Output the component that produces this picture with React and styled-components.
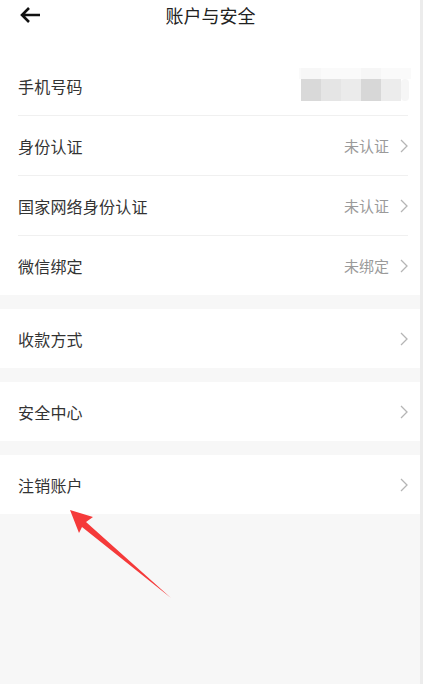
import React from "react";
import styled, { createGlobalStyle } from "styled-components";

const Global = createGlobalStyle`
  html, body { margin: 0; padding: 0; }
  body {
    background: #f7f7f7;
    font-family: "Noto Sans CJK SC", "Noto Sans", sans-serif;
    -webkit-font-smoothing: antialiased;
  }
`;

const Screen = styled.div`
  position: relative;
  display: flex;
  width: 423px;
  min-height: 684px;
  overflow: hidden;
`;

const Main = styled.div`
  flex: 1;
  display: flex;
  flex-direction: column;
  background: #f7f7f7;
`;

const ScrollTrack = styled.div`
  width: 3px;
  background: #ececec;
`;

const Header = styled.div`
  position: relative;
  height: 56px;
  background: #fff;
  display: flex;
  justify-content: center;
`;

const BackButton = styled.div`
  position: absolute;
  left: 19px;
  top: 6px;
  width: 22px;
  height: 18px;
  display: flex;
`;

const Title = styled.div`
  margin-top: 3px;
  font-size: 18px;
  line-height: 24px;
  color: #222;
  padding-left: 1px;
`;

const Section = styled.div`
  background: #fff;
  margin-bottom: ${(p) => (p.$last ? 0 : 14)}px;
`;

const Row = styled.div`
  height: 59px;
  margin: 0 12px 0 18px;
  display: flex;
  align-items: center;
  border-top: ${(p) => (p.$divider ? "1px solid #f0f0f0" : "none")};
`;

const Label = styled.div`
  flex: 1;
  font-size: 16px;
  color: #333;
  letter-spacing: 0.2px;
`;

const Value = styled.div`
  font-size: 15px;
  color: #9a9a9a;
  margin-right: 11px;
`;

const Chevron = styled.svg`
  width: 8px;
  height: 14px;
  display: block;
`;

const Mosaic = styled.svg`
  width: 112px;
  height: 36px;
  display: block;
  margin-right: -3px;
`;

const ArrowOverlay = styled.svg`
  position: absolute;
  left: 0;
  top: 0;
  pointer-events: none;
`;

const Arrow = () => (
  <Chevron viewBox="0 0 8 14">
    <path d="M1 1 L7 7 L1 13" fill="none" stroke="#b5b5b5" strokeWidth="1.3" />
  </Chevron>
);

const PhoneMosaic = () => (
  <Mosaic viewBox="0 0 112 36">
    <rect x="0" y="0" width="112" height="11" fill="#fafafa" />
    <rect x="2" y="0" width="20" height="11" fill="#f7f7f7" />
    <rect x="62" y="0" width="20" height="11" fill="#f6f6f6" />
    <rect x="2" y="11" width="20" height="22" fill="#d9d9d9" />
    <rect x="22" y="11" width="20" height="22" fill="#e5e5e5" />
    <rect x="42" y="11" width="20" height="22" fill="#ebebeb" />
    <rect x="62" y="11" width="20" height="22" fill="#d7d7d7" />
    <rect x="82" y="11" width="20" height="22" fill="#ececec" />
    <rect x="102" y="11" width="8" height="22" rx="4" fill="#f6f6f6" />
  </Mosaic>
);

const rowsA = [
  { label: "手机号码", phone: true },
  { label: "身份认证", value: "未认证" },
  { label: "国家网络身份认证", value: "未认证" },
  { label: "微信绑定", value: "未绑定" },
];

export default function App() {
  return (
    <>
      <Global />
      <Screen>
        <Main>
          <Header>
            <BackButton>
              <svg width="22" height="18" viewBox="0 0 22 18">
                <path
                  d="M21 9 H3 M10 2 L3 9 L10 16"
                  fill="none"
                  stroke="#111"
                  strokeWidth="2.6"
                  strokeLinecap="butt"
                  strokeLinejoin="miter"
                />
              </svg>
            </BackButton>
            <Title>账户与安全</Title>
          </Header>
          <Section>
            {rowsA.map((r, i) => (
              <Row key={r.label} $divider={i > 0}>
                <Label>{r.label}</Label>
                {r.phone ? (
                  <PhoneMosaic />
                ) : (
                  <>
                    <Value>{r.value}</Value>
                    <Arrow />
                  </>
                )}
              </Row>
            ))}
          </Section>
          <Section>
            <Row>
              <Label>收款方式</Label>
              <Arrow />
            </Row>
          </Section>
          <Section>
            <Row>
              <Label>安全中心</Label>
              <Arrow />
            </Row>
          </Section>
          <Section $last>
            <Row>
              <Label>注销账户</Label>
              <Arrow />
            </Row>
          </Section>
        </Main>
        <ScrollTrack />
        <ArrowOverlay width="423" height="684" viewBox="0 0 423 684">
          <polygon
            points="70,510 93,517 86,522 171,598 82,527 79,533"
            fill="#f53a3a"
          />
        </ArrowOverlay>
      </Screen>
    </>
  );
}
